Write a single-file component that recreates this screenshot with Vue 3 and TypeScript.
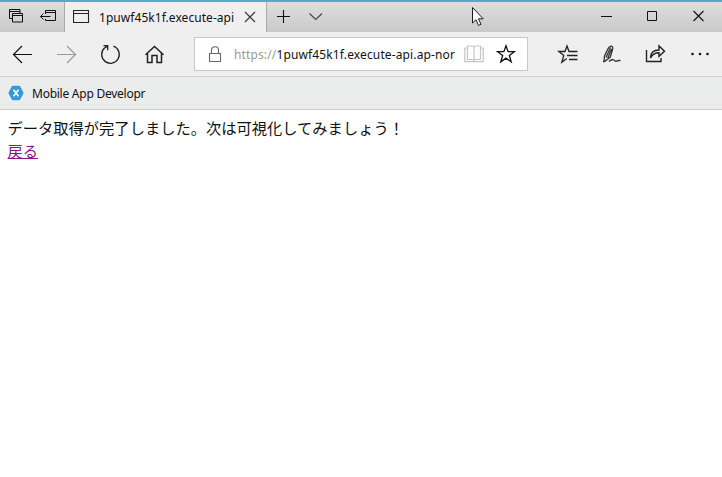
<script setup lang="ts">
const tabTitle = '1puwf45k1f.execute-api'
const favorite = 'Mobile App Developr'
</script>

<template>
  <div class="browser">
    <header class="tabs">
      <div class="tab-tools">
        <svg class="tool" width="32" height="30" viewBox="0 0 32 30" fill="none" stroke="#111" stroke-width="1">
          <path d="M12 16.500H9.500v-9h10.500v3.500M9.500 9.500h10.500M12.500 11.500h10v8.500h-10zM12.500 13.500h10" />
        </svg>
        <svg class="tool" width="32" height="30" viewBox="0 0 32 30" fill="none" stroke="#111" stroke-width="1">
          <path d="M13.500 12V8.500h10v10h-10V17M13.500 10.500h10M8.500 14.500h10M11.500 11.500l-3 3 3 3" />
        </svg>
      </div>
      <div class="tab">
        <svg width="17" height="14" viewBox="0 0 17 14" fill="none" stroke="#222" stroke-width="1.1">
          <path d="M.5.5h15v12H.5zM.5 3.500h15" />
        </svg>
        <span class="tab-title">{{ tabTitle }}</span>
        <svg class="tab-close" width="12" height="12" viewBox="0 0 12 12" fill="none" stroke="#333" stroke-width="1.1">
          <path d="M1 1l10 10M11 1L1 11" />
        </svg>
      </div>
      <svg class="new-tab" width="14" height="14" viewBox="0 0 14 14" fill="none" stroke="#111" stroke-width="1.1">
        <path d="M0 6.500h13M6.500 0v13" />
      </svg>
      <svg class="tab-chevron" width="14" height="8" viewBox="0 0 14 8" fill="none" stroke="#444" stroke-width="1.1">
        <path d="M.5.5l6.250 6L13 .5" />
      </svg>
      <div class="window-controls">
        <svg width="46" height="30" viewBox="0 0 46 30" stroke="#111"><path d="M18 14.500h11" /></svg>
        <svg width="46" height="30" viewBox="0 0 46 30" fill="none" stroke="#111"><path d="M18.500 9.500h9v9h-9z" /></svg>
        <svg width="47" height="30" viewBox="0 0 47 30" stroke="#111" stroke-width="1.1"><path d="M18.500 9l10 10M28.500 9l-10 10" /></svg>
      </div>
    </header>

    <nav class="toolbar">
      <div class="buttons">
        <svg viewBox="0 0 44 44" stroke="#111" stroke-width="1.200"><path d="M13.500 22.500H32M22 14l-8.500 8.500L22 31" /></svg>
        <svg viewBox="0 0 44 44" stroke="#999" stroke-width="1.200"><path d="M13 22.500h18.500M23 14l8.500 8.500L23 31" /></svg>
        <svg viewBox="0 0 44 44" stroke="#222" stroke-width="1.300"><path d="M25.500 14.200A8.800 8.800 0 1 1 16.500 16L19.500 13.900M15.500 13.700h4.200v4.500" /></svg>
        <svg viewBox="0 0 44 44" stroke="#222" stroke-width="1.500"><path d="M13.500 22.700l9-8.200 9 8.200M15.500 21v9.500h4.500v-7h5v7h4.500V21" /></svg>
      </div>
      <div class="address">
        <svg class="lock" width="14" height="17" viewBox="0 0 14 17" fill="none" stroke="#666" stroke-width="1.1">
          <path d="M1.500 7.500h11v8h-11zM3.500 7V4.300a3.500 3.500 0 0 1 7 0V7" />
        </svg>
        <div class="url"><span class="scheme">https://</span>1puwf45k1f.execute-api.ap-nor</div>
        <svg class="reader" width="20" height="18" viewBox="0 0 20 18" fill="none" stroke="#c5c5c5" stroke-width="1.2">
          <path d="M3.500 1H8q2 0 2 1.500Q10 1 12 1h4.500v13.500H12q-2 0-2 1.500 0-1.500-2-1.500H3.500zM10 2v14M3 3H.8v13.700h18.400V3H17" />
        </svg>
        <svg class="star" width="20" height="20" viewBox="0 0 20 20" fill="none" stroke="#111" stroke-width="1.3">
          <path d="M10 1.700l2.100 6h6.200l-5 3.800 1.900 6.300-5.200-3.700-5.200 3.700 1.900-6.300-5-3.800h6.200z" />
        </svg>
      </div>
      <div class="buttons actions">
        <svg viewBox="0 0 44 44" stroke="#222" stroke-width="1.3"><path d="M24.500 19.500H23L21 14l-2 5.500h-6.200l5 4-2 6.700 5-3.700M23 19.500h8.500M21 23.500h10.500M23 27.500h8.500" /></svg>
        <svg viewBox="0 0 44 44" stroke="#333" stroke-width="1.300"><path d="M13 29.500h1.500l5.800-4.500 2.200-7.500q.8-3.500-1.500-3.300-2 .2-3.300 3L14.500 24l-.5 5.500M16 25.500l4.500-10M17.800 26l3.700-9M19 29.500c3.500-3 5-2 5.800-.8 1.300 1.500 2.500-.2 4-.4l1.700.2" /></svg>
        <svg viewBox="0 0 44 44" stroke="#222" stroke-width="1.400"><path d="M12.500 18v11.500H27V26M16.500 26c0-6 3-8 8.500-8v-4l5.500 5.300-5.500 5v-3.500c-4 0-6.500 1-8.500 5.200z" /></svg>
        <svg viewBox="0 0 44 44"><g fill="#111"><circle cx="14.500" cy="22" r="1.300" /><circle cx="22" cy="22" r="1.300" /><circle cx="29.500" cy="22" r="1.300" /></g></svg>
      </div>
    </nav>

    <div class="favorites">
      <svg width="16" height="16" viewBox="0 0 16 16">
        <path fill="#3498db" d="M5 .8h6q.8 0 1.200.7l3.100 5.700q.3.800 0 1.600l-3.100 5.700q-.4.700-1.200.7H5q-.8 0-1.200-.7L.7 8.800q-.3-.8 0-1.600l3.100-5.700Q4.200.8 5 .8z" />
        <path d="M5.500 4.700l5 6.600M10.500 4.700l-5 6.600" fill="none" stroke="#fff" stroke-width="1.700" />
      </svg>
      <span class="favorite-name">{{ favorite }}</span>
    </div>

    <main class="page">
      <p>データ取得が完了しました。次は可視化してみましょう！</p>
      <a href="#">戻る</a>
    </main>

    <svg class="cursor" width="14" height="21" viewBox="0 0 14 21" fill="#fff" stroke="#1b1b28" stroke-width="1">
      <path d="M1.500 1.500v15.500l3.500-3.300 2.500 5.700 2.500-1.100-2.500-5.500h4.700z" />
    </svg>
  </div>
</template>

<style>
body {
  margin: 0;
  background: #fff;
}
</style>

<style scoped>
.browser {
  position: relative;
  width: 722px;
  height: 477px;
  overflow: hidden;
  background: #fff;
  color: #111;
  font-family: "Noto Sans", "Noto Sans CJK JP", sans-serif;
  font-size: 12px;
}
svg {
  display: block;
  flex: none;
}
.tabs {
  box-sizing: border-box;
  display: flex;
  align-items: center;
  height: 32px;
  border-top: 2px solid #55a8d2;
  background: linear-gradient(#dedede, #c9c9c9);
}
.tab-tools {
  box-sizing: border-box;
  display: flex;
  width: 65px;
  border-right: 1px solid #aaa;
}
.tab {
  box-sizing: border-box;
  display: flex;
  align-items: center;
  width: 202px;
  height: 30px;
  padding-left: 8px;
  border-right: 1px solid #aaa;
  background: #efefef;
}
.tab-title {
  width: 136px;
  margin-left: 9px;
  letter-spacing: 0.05px;
  white-space: nowrap;
}
.tab-close {
  margin-left: 9px;
}
.new-tab {
  margin-left: 10px;
}
.tab-chevron {
  margin-left: 18px;
}
.window-controls {
  display: flex;
  margin-left: auto;
}
.toolbar {
  box-sizing: border-box;
  display: flex;
  align-items: center;
  height: 45px;
  border-bottom: 1px solid #cfcfcf;
  background: #efefef;
}
.buttons {
  display: flex;
}
.buttons svg {
  width: 44px;
  height: 44px;
  fill: none;
}
.actions {
  margin-left: 18px;
}
.address {
  box-sizing: border-box;
  display: flex;
  align-items: center;
  width: 334px;
  height: 34px;
  margin-left: 18px;
  border: 1px solid #c8c8c8;
  background: #fff;
}
.lock {
  margin-left: 13px;
}
.url {
  width: 222px;
  margin-left: 12px;
  letter-spacing: 0.13px;
  white-space: nowrap;
}
.scheme {
  color: #999;
}
.reader {
  margin-left: 8px;
}
.star {
  margin-left: 12px;
}
.favorites {
  box-sizing: border-box;
  display: flex;
  align-items: center;
  height: 33px;
  padding-left: 8px;
  border-bottom: 1px solid #cbcbcb;
  background: #ebecec;
}
.favorite-name {
  margin-left: 8px;
  letter-spacing: -0.25px;
  white-space: nowrap;
}
.page {
  padding: 6px 7.5px;
  font-family: "Noto Sans CJK JP", sans-serif;
  font-size: 15.27px;
  line-height: 23px;
}
.page p {
  margin: 0;
  white-space: nowrap;
}
.page a {
  color: #8b168b;
}
.cursor {
  position: absolute;
  left: 471px;
  top: 6px;
}
</style>
